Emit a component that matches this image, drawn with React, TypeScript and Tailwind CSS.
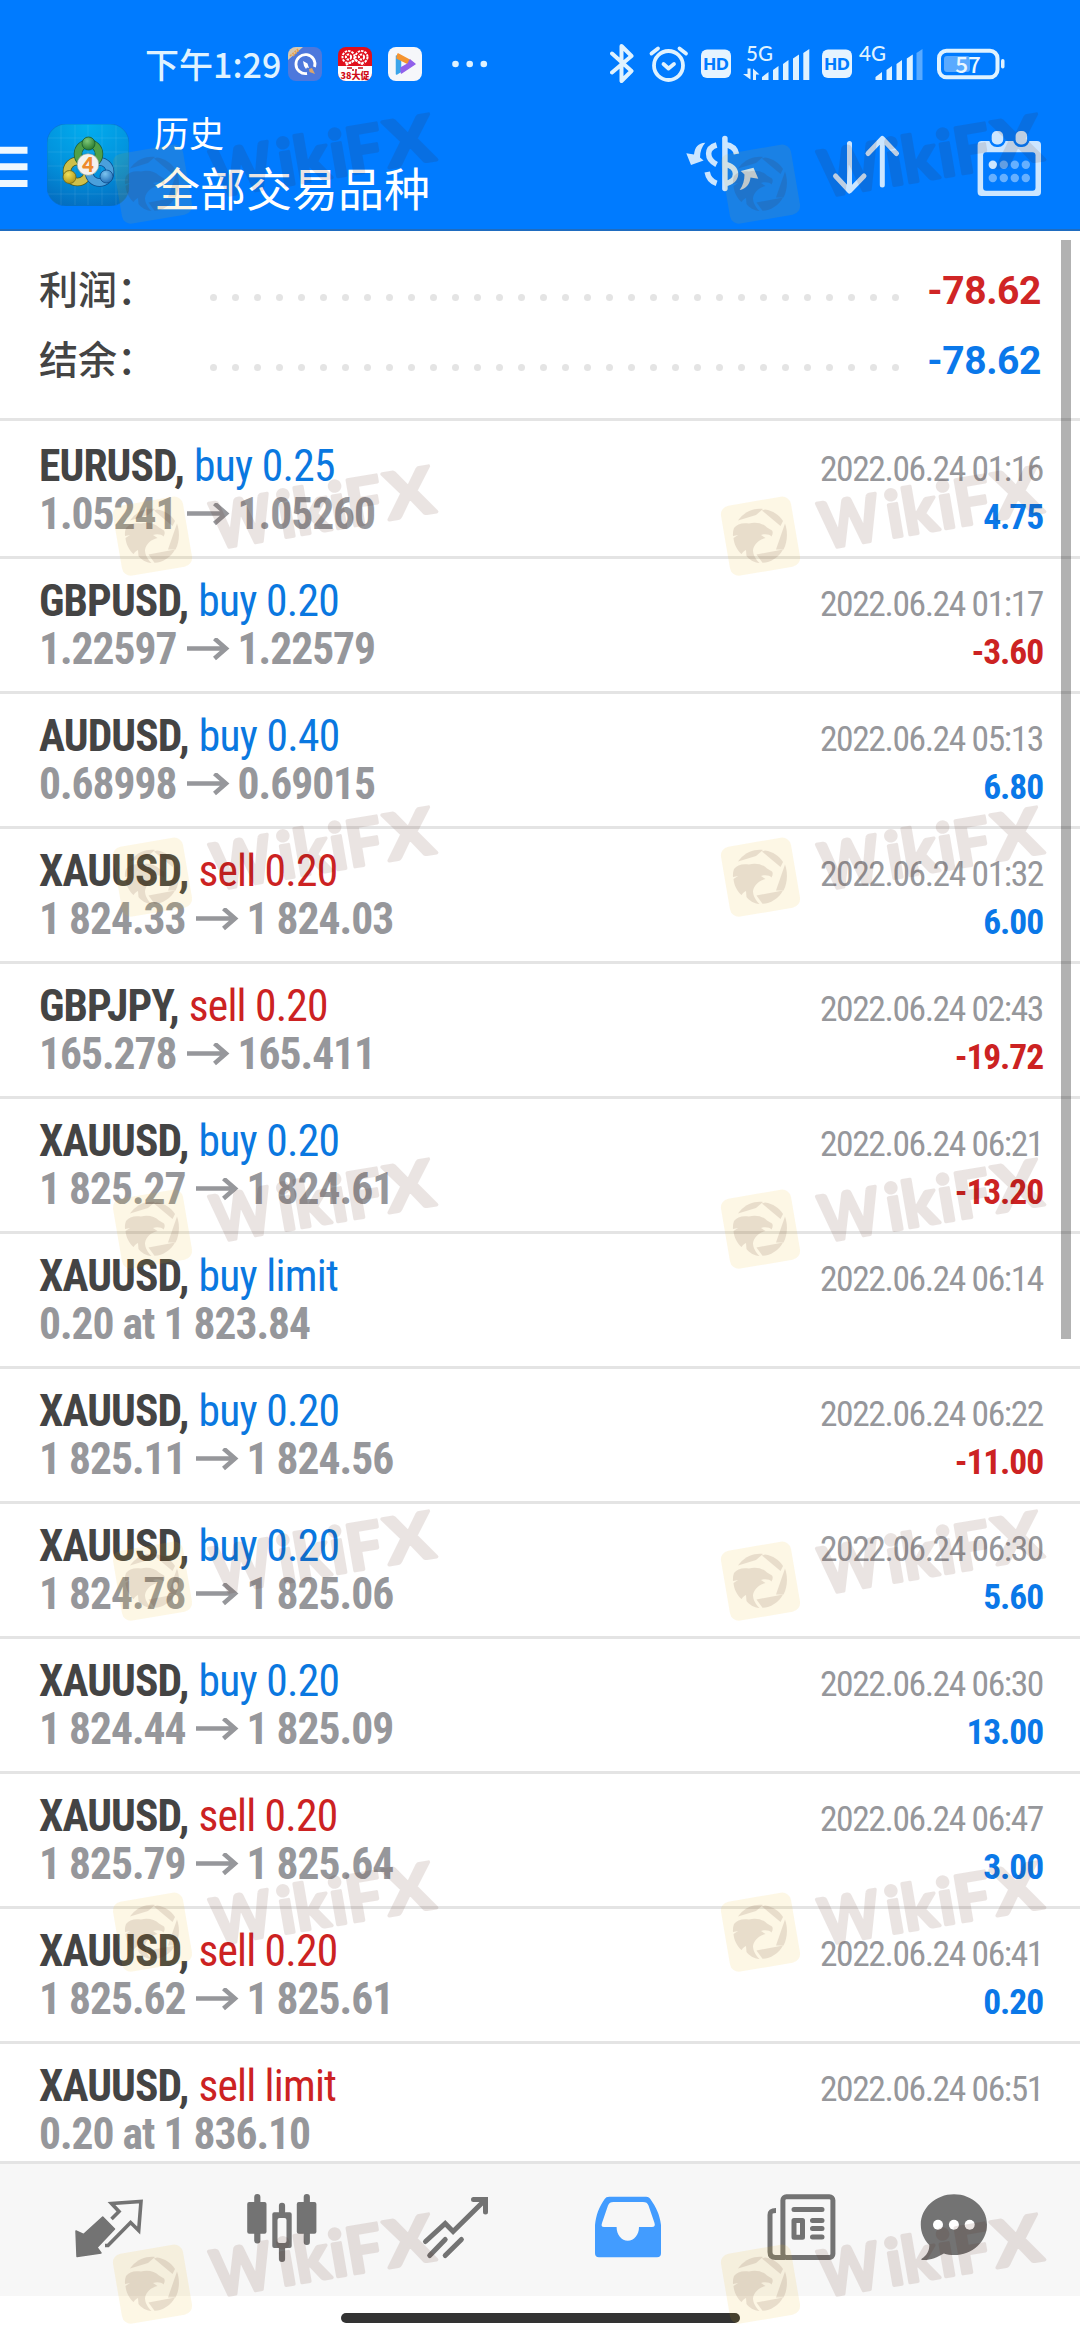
import React from "react";

type Deal = {
  symbol: string;
  side: "buy" | "sell";
  volume: string;
  from?: string;
  to?: string;
  note?: string;
  time: string;
  profit?: string;
};

const deals: Deal[] = [
  { symbol: "EURUSD", side: "buy", volume: "0.25", from: "1.05241", to: "1.05260", time: "2022.06.24 01:16", profit: "4.75" },
  { symbol: "GBPUSD", side: "buy", volume: "0.20", from: "1.22597", to: "1.22579", time: "2022.06.24 01:17", profit: "-3.60" },
  { symbol: "AUDUSD", side: "buy", volume: "0.40", from: "0.68998", to: "0.69015", time: "2022.06.24 05:13", profit: "6.80" },
  { symbol: "XAUUSD", side: "sell", volume: "0.20", from: "1 824.33", to: "1 824.03", time: "2022.06.24 01:32", profit: "6.00" },
  { symbol: "GBPJPY", side: "sell", volume: "0.20", from: "165.278", to: "165.411", time: "2022.06.24 02:43", profit: "-19.72" },
  { symbol: "XAUUSD", side: "buy", volume: "0.20", from: "1 825.27", to: "1 824.61", time: "2022.06.24 06:21", profit: "-13.20" },
  { symbol: "XAUUSD", side: "buy", volume: "limit", note: "0.20 at 1 823.84", time: "2022.06.24 06:14" },
  { symbol: "XAUUSD", side: "buy", volume: "0.20", from: "1 825.11", to: "1 824.56", time: "2022.06.24 06:22", profit: "-11.00" },
  { symbol: "XAUUSD", side: "buy", volume: "0.20", from: "1 824.78", to: "1 825.06", time: "2022.06.24 06:30", profit: "5.60" },
  { symbol: "XAUUSD", side: "buy", volume: "0.20", from: "1 824.44", to: "1 825.09", time: "2022.06.24 06:30", profit: "13.00" },
  { symbol: "XAUUSD", side: "sell", volume: "0.20", from: "1 825.79", to: "1 825.64", time: "2022.06.24 06:47", profit: "3.00" },
  { symbol: "XAUUSD", side: "sell", volume: "0.20", from: "1 825.62", to: "1 825.61", time: "2022.06.24 06:41", profit: "0.20" },
  { symbol: "XAUUSD", side: "sell", volume: "limit", note: "0.20 at 1 836.10", time: "2022.06.24 06:51" },
];

const summary = [
  { label: "利润：", value: "-78.62", color: "text-[#d02525]" },
  { label: "结余：", value: "-78.62", color: "text-[#0a78ea]" },
];

const watermarkRows = [100, 452, 793, 1145, 1497, 1848, 2200];

const StatusBar: React.FC = () => (
  <div className="flex h-[94px] items-start pl-[145px] pt-[43px] text-[#dff2ff]">
    <div className="w-[143px] whitespace-nowrap text-[34px] font-medium leading-[41px] font-['Noto_Sans_CJK_SC',sans-serif]">
      下午1:29
    </div>

    {/* Notification icons */}
    <div className="mt-1 flex gap-4">
      <svg width="34" height="34" viewBox="0 0 34 34">
        <defs>
          <clipPath id="appClip">
            <rect width="34" height="34" rx="8" />
          </clipPath>
        </defs>
        <g clipPath="url(#appClip)">
          <rect width="34" height="34" fill="#4d78dc" />
          <path d="M0 0H15L0 13Z" fill="#d6c8b0" />
          <path d="M2 9 10 2M5 9l6-6" stroke="#e8a04a" strokeWidth="1.5" strokeDasharray="2 1" />
          <path d="M19 26.500a9.500 9.500 0 1 1 7.500-6.500" fill="none" stroke="#fff" strokeWidth="2.800" />
          <path d="M15 14l4.500 2.500 1.500 4.500-2-.5-1 1.500-2-3Z" fill="#fff" />
          <path d="M21 22l3-1 3 6-5.500-2Z" fill="#dba56a" />
        </g>
      </svg>
      <svg width="34" height="34" viewBox="0 0 34 34">
        <g clipPath="url(#appClip)">
          <rect width="34" height="34" fill="#e0101c" />
          <rect y="19" width="34" height="15" fill="#fff" />
          <g fill="none" stroke="#fff" strokeWidth="2" strokeDasharray="2.4 1">
            <circle cx="10.5" cy="10" r="6" />
            <circle cx="23.5" cy="10" r="6" />
            <circle cx="10.5" cy="10" r="2.6" />
            <circle cx="23.5" cy="10" r="2.6" />
            <path d="M8 18l9-5 9 5M10 22h14" />
          </g>
          <path d="M9 21h5M20 21h5M15 22v2M18 22v2" stroke="#c8141e" strokeWidth="1.6" />
          <text x="17" y="32" textAnchor="middle" fontSize="9" fontWeight="900" fill="#d00c18" fontFamily="Noto Sans CJK SC, sans-serif">
            38大促
          </text>
        </g>
      </svg>
      <svg width="34" height="34" viewBox="0 0 34 34">
        <rect width="34" height="34" rx="8" fill="#f6f7fa" />
        <path d="M8.500 9v18l4-2.500V12Z" fill="#3ba5ea" stroke="#3ba5ea" strokeWidth="1.500" strokeLinejoin="round" />
        <path d="M10 7 22 13.500l-1 3.500-12-6Z" fill="#f59430" stroke="#f59430" strokeWidth="1.500" strokeLinejoin="round" />
        <path d="M22 13l5 4-13.500 9-.5-5 7-4Z" fill="#9160ea" stroke="#9160ea" strokeWidth="1.500" strokeLinejoin="round" />
      </svg>
      <svg className="ml-[13px]" width="40" height="34" viewBox="0 0 40 34">
        <g fill="#dff2ff">
          <circle cx="4.5" cy="17" r="3.3" />
          <circle cx="18.7" cy="17" r="3.3" />
          <circle cx="32.8" cy="17" r="3.3" />
        </g>
      </svg>
    </div>

    {/* System icons */}
    <svg className="ml-[119px]" width="24" height="42" viewBox="0 0 24 42" fill="none" stroke="#dff2ff" strokeWidth="4" strokeLinejoin="round" strokeLinecap="round">
      <path d="M2 10.500 21.500 28 11.500 38V3L21.500 13 2 29.500" />
    </svg>
    <svg className="ml-[14px]" width="42" height="42" viewBox="0 0 42 42" fill="none" stroke="#dff2ff" strokeWidth="3.800" strokeLinecap="round" strokeLinejoin="round">
      <circle cx="20.500" cy="22.500" r="14.500" />
      <path d="M15.500 21l5 4.500 5.500-4.500M3.500 10.500 10 5.500M38 10.500 31.500 5.500" />
    </svg>
    <HdBadge className="ml-[11px]" />
    <svg className="ml-[11px] overflow-visible" width="70" height="40" viewBox="0 0 70 40" fill="#dff2ff">
      <text x="4" y="17.500" fontSize="20.500" fontFamily="Lato, sans-serif" fontWeight="500" textLength="27">5G</text>
      <path d="M5.500 25.500h3v11L1 31h4.500ZM11 25.500l6.500 6H14v5.500h-3Z" />
      <path d="M20 34l6.500-5v8H20ZM31 27l5.500-4v14H31ZM41 21l5.500-4v20H41ZM51 15.500l6-4V37h-6ZM61.300 10l6-4V37h-6Z" />
    </svg>
    <HdBadge className="ml-[10px]" />
    <svg className="ml-[6px] overflow-visible" width="68" height="40" viewBox="0 0 68 40" fill="#dff2ff">
      <text x="1" y="17.500" fontSize="20.500" fontFamily="Lato, sans-serif" fontWeight="500" textLength="27">4G</text>
      <path d="M17.500 34l6.500-5v8h-6.500ZM28.500 27l5.500-4v14h-5.500ZM38.500 21l5.500-4v20h-5.500ZM48.800 15.500l6-4V37h-6Z" />
      <path d="M58.500 10l6-4V37h-6Z" opacity=".4" />
    </svg>
    <svg className="ml-[11px]" width="70" height="42" viewBox="0 0 70 42">
      <rect x="2" y="7.800" width="58.500" height="26.500" rx="7.500" fill="none" stroke="#dff2ff" strokeWidth="4" />
      <rect x="7" y="13" width="26" height="16" rx="3" fill="#5aaaff" />
      <rect x="64" y="16" width="3.500" height="9.500" rx="1.700" fill="#dff2ff" />
      <text x="31" y="29.500" textAnchor="middle" fontSize="22.500" fontWeight="500" fill="#eaf7ff" fontFamily="Noto Sans CJK SC, sans-serif">57</text>
    </svg>
  </div>
);

const HdBadge: React.FC<{ className: string }> = ({ className }) => (
  <svg className={className} width="30" height="40" viewBox="0 0 30 40">
    <rect y="6.500" width="30" height="28.500" rx="6" fill="#e6f4ff" />
    <text x="15" y="26.500" textAnchor="middle" fontSize="16.500" fontWeight="800" fill="#007bff" fontFamily="Lato, sans-serif">HD</text>
  </svg>
);

const AppLogo: React.FC = () => (
  <svg width="82" height="82" viewBox="0 0 82 82">
    <defs>
      <radialGradient id="logoBg" cx=".5" cy="0" r="1.1">
        <stop offset="0" stopColor="#02aef0" />
        <stop offset=".55" stopColor="#0292dc" />
        <stop offset="1" stopColor="#0468bc" />
      </radialGradient>
      <radialGradient id="green" cx=".4" cy=".3" r=".8">
        <stop offset="0" stopColor="#7fc879" />
        <stop offset="1" stopColor="#1d7024" />
      </radialGradient>
      <radialGradient id="yellow" cx=".4" cy=".3" r=".8">
        <stop offset="0" stopColor="#f1e05a" />
        <stop offset="1" stopColor="#a88c10" />
      </radialGradient>
      <radialGradient id="blue" cx=".4" cy=".3" r=".8">
        <stop offset="0" stopColor="#7cc4f0" />
        <stop offset="1" stopColor="#1664b0" />
      </radialGradient>
    </defs>
    <rect width="82" height="82" rx="19" fill="url(#logoBg)" stroke="#0a6fc8" strokeWidth=".6" />
    <path d="M14 1v80M28 1v80M41 1v80M55 1v80M69 1v80M1 14h80M1 28h80M1 42h80M1 56h80M1 70h80" stroke="#fff" strokeOpacity=".09" />
    <g fill="none">
      <circle cx="30.500" cy="47.500" r="10.500" stroke="#4c5a1c" strokeWidth="8.500" />
      <circle cx="30.500" cy="47.500" r="10.500" stroke="#cfc04a" strokeWidth="7" />
      <circle cx="52.500" cy="48" r="10.500" stroke="#0c4c8c" strokeWidth="8.500" />
      <circle cx="52.500" cy="48" r="10.500" stroke="#4aa0dc" strokeWidth="7" />
      <circle cx="41.500" cy="30" r="10.500" stroke="#1b5c3a" strokeWidth="8.500" />
      <circle cx="41.500" cy="30" r="10.500" stroke="#4fa048" strokeWidth="7" />
    </g>
    <circle cx="41.500" cy="19.500" r="6.500" fill="url(#green)" stroke="#185a30" strokeWidth=".8" />
    <circle cx="22.500" cy="53" r="6.500" fill="url(#yellow)" stroke="#6c6414" strokeWidth=".8" />
    <circle cx="59.500" cy="52.500" r="6.500" fill="url(#blue)" stroke="#0c4c8c" strokeWidth=".8" />
    <circle cx="41" cy="40.500" r="10.800" fill="#f4f1ee" stroke="#8a9a8a" strokeWidth=".6" />
    <text x="41" y="47.500" textAnchor="middle" fontSize="20" fontWeight="800" fill="#ee8a2c" fontFamily="Lato, sans-serif">4</text>
  </svg>
);

const Header: React.FC = () => (
  <header className="h-[231px] border-b-2 border-[#1f6cc0] bg-[#007bff]">
    <StatusBar />
    <div className="flex items-start">
      <svg className="mt-[50px]" width="28" height="46" viewBox="0 0 28 46" fill="#eef8ff">
        <path d="M0 2.700h27.500v7H0ZM0 19.300h27.500v7H0ZM0 36h27.500v7H0Z" />
      </svg>
      <div className="ml-[19px] mt-[30px]">
        <AppLogo />
      </div>
      <div className="ml-[25px] mt-[14px] w-[530px] text-white font-['Noto_Sans_CJK_SC',sans-serif]">
        <div className="text-[35px] leading-[48px]">历史</div>
        <div className="text-[46px] leading-[61px]">全部交易品种</div>
      </div>
      <svg className="mt-[36px]" width="76" height="68" viewBox="0 0 76 68">
        <g fill="#cce6ff">
          <path d="M21.300 12.700C14 13 11 17 10 24.500L2.300 23.300 7 35l12.600-4.500L16 27.500c0-6 2-11 5.300-14.800Z" />
          <path d="M55.700 60C62 59 66 54 66.500 47.500l7.800 1.200L69.500 37.700 56.800 41l3.700 3.500c0 6-1.500 11-4.800 15.500Z" />
        </g>
        <g fill="none" stroke="#cce6ff" strokeWidth="5.500">
          <path d="M32.600 15C22 18 22 29 32.600 34.500M23.200 42c1 6 4 9.500 9.400 11.300" />
          <path d="M41 14.500c7 1 10.500 4 11.500 9.500M41 34.500c14 2 14 17 0 19" />
          <path d="M40.900 8.500v50" strokeLinecap="round" />
        </g>
      </svg>
      <svg className="ml-[71px] mt-[36px]" width="70" height="68" viewBox="0 0 70 68" fill="none" stroke="#cce6ff" strokeWidth="5" strokeLinecap="round" strokeLinejoin="round">
        <path d="M18.500 13.500v47M4.500 46l14 15 14.500-15M51.300 55V9M37 23.500 51.300 8.500 65.500 23.500" />
      </svg>
      <svg className="ml-[74px] mt-[36px]" width="68" height="68" viewBox="0 0 68 68">
        <rect x="2.600" y="11" width="63.400" height="55" rx="4" fill="#cce6ff" />
        <rect x="8.100" y="22.300" width="52.400" height="38.400" rx="3" fill="#007bff" />
        <rect x="16.700" y="1" width="11.500" height="13.500" rx="5" fill="#cce6ff" stroke="#007bff" strokeWidth="5" paintOrder="stroke" />
        <rect x="40.600" y="1" width="11.500" height="13.500" rx="5" fill="#cce6ff" stroke="#007bff" strokeWidth="5" paintOrder="stroke" />
        <circle cx="17.800" cy="34.700" r="4.200" fill="#cce6ff" />
        <g fill="#66b0ff">
          <circle cx="28.800" cy="34.700" r="4.200" />
          <circle cx="39.800" cy="34.700" r="4.200" />
          <circle cx="50.800" cy="34.700" r="4.200" />
          <circle cx="17.800" cy="48" r="4.200" />
          <circle cx="28.800" cy="48" r="4.200" />
          <circle cx="39.800" cy="48" r="4.200" />
          <circle cx="50.800" cy="48" r="4.200" />
        </g>
      </svg>
    </div>
  </header>
);

const Summary: React.FC = () => (
  <div className="h-[190px] shrink-0 border-b-[3px] border-[#e4e4e4] pl-[39px] pr-[39px] pt-[23px]">
    {summary.map((item) => (
      <div key={item.label} className="flex h-[70px] items-center">
        <div className="w-[171px] whitespace-nowrap pb-[3px] text-[39px] font-medium leading-[67px] text-[#444] font-['Noto_Sans_CJK_SC',sans-serif]">
          {item.label}
        </div>
        <div className="mt-[17px] flex gap-[15px]">
          {Array.from({ length: 32 }).map((_, index) => (
            <span key={index} className="size-[7px] rounded-full bg-[#e4e4e4]" />
          ))}
        </div>
        <div className={`ml-auto pt-[4px] text-[39px] font-bold tracking-[-0.4px] font-stretch-normal font-['Roboto',sans-serif] ${item.color}`}>
          {item.value}
        </div>
      </div>
    ))}
  </div>
);

const DealRow: React.FC<{ deal: Deal }> = ({ deal }) => (
  <div className="flex h-[135px] shrink-0 justify-between border-b-[3px] border-[#e4e4e4] pl-[39px] pr-[37px] first:h-[138px] first:pt-[3px]">
    <div className="pt-[19px] text-[43.5px] leading-[48px]">
      <div className="whitespace-nowrap">
        <span className="font-bold tracking-[-0.9px] text-[#444]">{deal.symbol},</span>{" "}
        <span className={deal.side === "buy" ? "tracking-[-0.7px] text-[#0a78e0]" : "tracking-[-0.8px] text-[#cc2222]"}>
          {deal.side} {deal.volume}
        </span>
      </div>
      <div className="flex items-center whitespace-nowrap font-bold tracking-[-1px] text-[#96979b]">
        {deal.note ?? (
          <>
            <span>{deal.from}</span>
            <svg className="ml-[9px] mr-[8px]" width="44" height="24" viewBox="0 0 44 24" fill="none" stroke="#96979b" strokeWidth="4.500">
              <path d="M1 10.500h39M28.500 .5 40 10.500 28.500 20.500" />
            </svg>
            <span>{deal.to}</span>
          </>
        )}
      </div>
    </div>
    <div className="pt-[21px] text-right text-[35.5px] leading-[48px] tracking-[-1.1px]">
      <div className="whitespace-nowrap tracking-[-1.4px] text-[#96979b]">{deal.time}</div>
      {deal.profit && (
        <div className={deal.profit.startsWith("-") ? "font-bold text-[#cc2222]" : "font-bold text-[#0a78e8]"}>
          {deal.profit}
        </div>
      )}
    </div>
  </div>
);

const BottomNav: React.FC = () => (
  <nav className="flex h-[135px] border-t-[3px] border-[#e4e4e4] bg-[#f7f7f7] pl-[22px] pt-[26px] text-[#737373]">
    <div className="flex w-[173px] justify-center">
      <svg width="72" height="72" viewBox="0 0 72 72" fill="none" stroke="currentColor" strokeWidth="3.600">
        <path d="M3 41l7.500 3.500L29.700 27 41.500 39 24 57.500l4 5.500L4 66.500Z" fill="currentColor" strokeWidth="1.500" strokeLinejoin="round" />
        <path d="M38.500 29l7.500-7.500-7.500-8L68 11.500l-2.300 29-8.100-8L35 55.500h-3" />
      </svg>
    </div>
    <div className="flex w-[173px] justify-center">
      <svg width="72" height="72" viewBox="0 0 72 72" fill="currentColor">
        <rect x="8.200" y="4" width="6.200" height="49.500" rx="3" />
        <rect x="1.200" y="12" width="19.300" height="31.700" rx="2" />
        <rect x="32.900" y="12.700" width="6.200" height="12" rx="3" />
        <rect x="32.900" y="55" width="6.200" height="17" rx="3" />
        <path fillRule="evenodd" d="M28.300 22.300h15.400a2 2 0 0 1 2 2V56a2 2 0 0 1-2 2H28.300a2 2 0 0 1-2-2V24.300a2 2 0 0 1 2-2ZM33.500 28a2 2 0 0 0-2 2v21a2 2 0 0 0 2 2h5a2 2 0 0 0 2-2V30a2 2 0 0 0-2-2Z" />
        <rect x="57.700" y="4" width="6.200" height="51" rx="3" />
        <rect x="50.800" y="12" width="19.600" height="31.700" rx="2" />
      </svg>
    </div>
    <div className="flex w-[173px] justify-center">
      <svg width="72" height="72" viewBox="0 0 72 72" fill="none" stroke="currentColor" strokeWidth="5" strokeLinecap="round">
        <path d="M6.500 51.500 26.200 33.500l7.900 8L65 11M54.500 9.500h12v12.500M10.700 65.500 26.200 49.500M26.200 65.500 42.400 49.500" />
      </svg>
    </div>
    <div className="flex w-[173px] justify-center">
      <svg width="72" height="72" viewBox="0 0 72 72" fill="#429cff" fillRule="evenodd">
        <path d="M17.400 6.700H54c2.500 0 3.500 1 4.500 2.500C64 17 67.500 24 69 35v28.300a4 4 0 0 1-4 4H7a4 4 0 0 1-4-4V35c1-10 4-18 9.500-25.800 1.200-1.700 2.400-2.500 4.900-2.500ZM21.500 12c-3 0-4.500 1-5.500 3.500L10 33c-.8 2.500-.5 4 2 4h12.600c0 8 5 13.700 11.200 13.700S47 45 47 37h13c2.500 0 3.300-1.500 2.500-4L56.500 15.500C55.500 13 54 12 51 12Z" />
      </svg>
    </div>
    <div className="flex w-[173px] justify-center">
      <svg width="72" height="72" viewBox="0 0 72 72" fill="none" stroke="currentColor" strokeWidth="5">
        <rect x="17.900" y="6.800" width="50" height="60.700" rx="3.500" />
        <path d="M11 20.500c-5 0-6 1.500-6 4.500v37c0 3.500 2 5.500 5.500 5.500H20" />
        <path d="M29 19.500h28M47.500 30.500h9.500M47.500 38.500h9.500M47.500 47h9.500" strokeLinecap="round" />
        <rect x="29" y="30.500" width="8.500" height="16.700" strokeLinejoin="round" />
      </svg>
    </div>
    <div className="flex w-[134px] justify-center">
      <svg width="72" height="72" viewBox="0 0 72 72" fill="currentColor">
        <path d="M36 4.300c18.300 0 33 13.600 33 30.400S54.300 65 36 65c-3.500 0-7-.5-10.100-1.500C19 67.500 12 70.500 4 70c-1 0-1-1 0-1.500 5-3.500 7.500-8 7.300-13.500C6 49.500 2.800 42.500 2.800 34.700 2.800 17.900 17.700 4.300 36 4.300Z" />
        <g fill="#fff">
          <circle cx="20" cy="34.700" r="5" />
          <circle cx="35.900" cy="34.700" r="5" />
          <circle cx="51.700" cy="34.700" r="5" />
        </g>
      </svg>
    </div>
  </nav>
);

const Watermark: React.FC = () => (
  <svg className="overflow-visible" width="350" height="135" viewBox="0 0 350 135">
    <g transform="rotate(-9.700 52.300 84.200)">
      <path
        d="M26 48.700h53a9 9 0 0 1 9 9v53a9 9 0 0 1-9 9H26a9 9 0 0 1-9-9v-53a9 9 0 0 1 9-9Z"
        fill="#f0b414"
        opacity=".11"
      />
    </g>
    {/* Eagle inside a camera shutter */}
    <g fill="#4b1405" opacity=".11">
      <path d="M32 66C38 59 47 56 55 57L48 63 30 68.500Z" />
      <path d="M57 57.500C65 58.500 71 63 75 69L72.500 74 54 58.500Z" />
      <path d="M77 71.500C80 80 79.500 90 75.500 97.500L68 97.500Z" />
      <path d="M48.500 102.500 75 97.500C71 105 63 110.500 54.500 110.800Z" />
      <path d="M26 76C29 72 34 70.500 41 71.500 47 69.500 55 71 59 75.500L64 78.500C65 80 65 82 63.500 84.500 62 82.500 57 81.500 53 83L57.500 86C51 87.500 46 92 45 98 45 103 48 107.500 51.500 111 46 110.500 41 107.500 38.500 104L38 98C34 100 34 102 33.500 102 29 98 26 92 25.500 86L30 83 25 84C24.800 81 25 78.500 26 76Z" />
    </g>
    <g
      transform="translate(106 99) rotate(-9.700)"
      fill="#4b1405"
      stroke="#4b1405"
      strokeWidth="3.500"
      strokeLinejoin="round"
      opacity=".11"
      fontFamily="Lato, sans-serif"
      fontWeight="700"
      fontSize="64"
    >
      <text transform="translate(10 0) scale(.9 1)">W</text>
      <text x="77 93.500 129.500 146">ikiF</text>
      <text transform="translate(186 0) scale(1.120 1)">X</text>
    </g>
  </svg>
);

const App: React.FC = () => {
  return (
    <div className="relative h-[2340px] w-[1080px] overflow-hidden bg-white font-['Roboto_Condensed','Roboto',sans-serif] font-stretch-condensed">
      <Header />

      <main className="flex h-[1930px] flex-col overflow-hidden">
        <Summary />
        <div className="flex shrink-0 flex-col">
          {deals.map((deal, index) => (
            <DealRow key={index} deal={deal} />
          ))}
        </div>
      </main>

      <BottomNav />

      {/* Gesture bar */}
      <div className="flex justify-center pt-[17px]">
        <div className="h-[10px] w-[399px] rounded-full bg-[#333]"></div>
      </div>

      {/* Scroll thumb */}
      <div className="absolute left-[1061px] top-[240px] h-[1099px] w-[10px] bg-black/30"></div>

      {/* Watermarks */}
      <div className="pointer-events-none absolute inset-0">
        {watermarkRows.map((top) => (
          <div key={top} className="absolute left-[100px] flex gap-[258px]" style={{ top }}>
            <Watermark />
            <Watermark />
          </div>
        ))}
      </div>
    </div>
  );
};

export default App;
